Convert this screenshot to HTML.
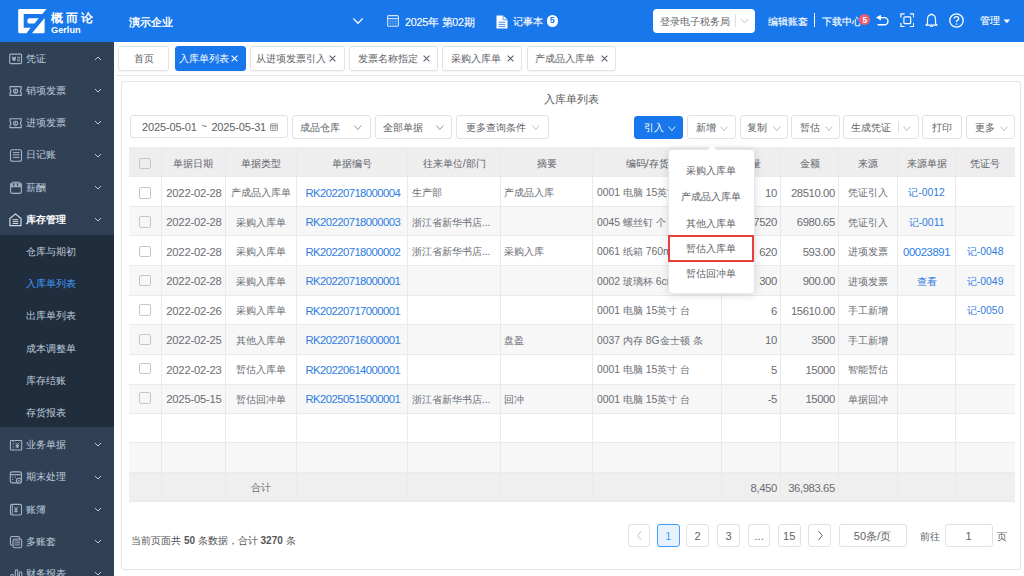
<!DOCTYPE html><html><head><meta charset="utf-8"><style>
*{box-sizing:border-box;margin:0;padding:0}
html,body{width:1024px;height:576px;overflow:hidden;background:#fff;font-family:"Liberation Sans",sans-serif;color:#606266}
.a{position:absolute}
.hdr{position:absolute;left:0;top:0;width:1024px;height:42px;background:#1877ea}
.side{position:absolute;left:0;top:42px;width:114px;height:534px;background:#304156}
.mi{position:absolute;left:0;width:114px;height:32.2px;color:#bfcbd9;font-size:9.8px;line-height:32.2px}
.mi .t{position:absolute;left:25.5px;top:0.4px}
.mi svg.ic{position:absolute;left:9px;top:10.8px}
.mi svg.ch{position:absolute;left:94px;top:12.6px}
.sub{position:absolute;left:0;width:114px;background:#1f2d3d}
.si{position:absolute;left:25.5px;margin-top:0.4px;font-size:9.8px;color:#bfcbd9;height:32.2px;line-height:32.2px}
.tab{position:absolute;top:46px;height:25.4px;border:1px solid #e2e3e5;border-radius:3px;box-shadow:0 0.5px 1px rgba(0,0,0,0.04);background:#fff;font-size:10.3px;line-height:22.3px;color:#5a5e66;text-align:center;white-space:nowrap}
.tab.on{background:#1877ea;border-color:#1877ea;color:#fff}
.card{position:absolute;left:121px;top:80.8px;width:900px;height:489.4px;border:1px solid #e4e5e7;border-radius:3px;background:#fff;box-shadow:0 0 2px rgba(0,0,0,0.04)}
.btn{position:absolute;top:115.4px;height:23px;border:1px solid #dcdfe6;border-radius:3px;background:#fff;font-size:10px;line-height:21px;color:#606266;white-space:nowrap}
.cell{position:absolute;height:100%;white-space:nowrap;overflow:hidden;font-size:10.4px;color:#6a6d73}
.row{position:absolute;left:129.2px;width:885.4px;border-bottom:1px solid #e9eaef}
.vl{position:absolute;width:1px;background:#e9eaef}
.num{font-size:11.3px;letter-spacing:-0.4px}
.pg{position:absolute;top:524px;height:22.6px;border:1px solid #dfe1e5;border-radius:3px;background:#fff;font-size:11px;line-height:20.6px;padding-top:1px;text-align:center;color:#606266}
</style></head><body>
<div class="hdr"></div>
<svg class="a" style="left:0;top:0" width="110" height="42" viewBox="0 0 110 42">
<path fill="#fff" d="M19.6 8.9 H46.5 L42.3 13.9 H23.7 V27.8 H30.7 L26.5 33.3 H19.6 Q18.2 33.3 18.2 31.9 V10.3 Q18.2 8.9 19.6 8.9Z"/>
<path fill="#fff" d="M29.6 18.3 H38.7 L34.6 23.6 H29.6 Q27.3 23.6 27.3 21 Q27.3 18.3 29.6 18.3Z"/>
<path fill="#fff" d="M44.6 18 V31.9 Q44.6 33.3 43.2 33.3 H32 Z"/>
</svg>
<div class="a" style="left:50.9px;top:9.6px;font-size:11.9px;letter-spacing:2.95px;color:#fff;font-weight:bold;line-height:16px">概而论</div>
<div class="a" style="left:51px;top:24.5px;font-size:9.2px;color:#fff;line-height:11px;font-weight:bold">Gerlun</div>
<div class="a" style="left:128.8px;top:14.3px;font-size:11.2px;color:#fff;line-height:16px;font-weight:bold">演示企业</div>
<svg class="a" style="left:352px;top:17px" width="12" height="8" viewBox="0 0 12 8"><path d="M1.3 1.4 L6 6.2 L10.7 1.4" fill="none" stroke="#fff" stroke-width="1.3"/></svg>
<svg class="a" style="left:387.3px;top:15.4px" width="12" height="12" viewBox="0 0 12 12"><rect x="0.6" y="0.6" width="10.8" height="10.6" rx="1" fill="none" stroke="#d6e5fc" stroke-width="1.1"/><path d="M0.6 3.6 H11.4" stroke="#d6e5fc" stroke-width="1.1"/><path d="M3.3 3.6 V11 M5.9 3.6 V11 M8.5 3.6 V11 M0.6 6.3 H11.4 M0.6 8.8 H11.4" stroke="#7fb0f2" stroke-width="0.5"/></svg>
<div class="a" style="left:405px;top:13.5px;font-size:10.7px;color:#fff;line-height:16px;font-weight:normal;-webkit-text-stroke:0.12px #fff;letter-spacing:-0.2px">2025年 第02期</div>
<svg class="a" style="left:495.5px;top:14.5px" width="12" height="14" viewBox="0 0 12 14"><path d="M0.5 0.5 H7.2 L11.5 4.8 V13.5 H0.5Z" fill="#fff"/><path d="M7.2 0.5 V4.8 H11.5" fill="none" stroke="#1877ea" stroke-width="0.7"/><path d="M2.6 7.2 H9.4 M2.6 9.4 H9.4 M2.6 11.6 H9.4" stroke="#1877ea" stroke-width="0.8"/></svg>
<div class="a" style="left:513.3px;top:13.5px;font-size:10.1px;color:#fff;line-height:16px;font-weight:normal;-webkit-text-stroke:0.12px #fff">记事本</div>
<div class="a" style="left:546.6px;top:15px;width:11.5px;height:11.5px;border-radius:50%;background:#fff;color:#1877ea;font-size:9px;font-weight:bold;text-align:center;line-height:11.5px">5</div>
<div class="a" style="left:653px;top:8.6px;width:101.5px;height:24.1px;background:#fff;border-radius:4px"></div>
<div class="a" style="left:660.4px;top:14.1px;font-size:9.9px;color:#606266;line-height:16px">登录电子税务局</div>
<div class="a" style="left:735px;top:14px;width:1px;height:13px;background:#dcdfe6"></div>
<svg class="a" style="left:739.5px;top:18px" width="9" height="6" viewBox="0 0 9 6"><path d="M0.8 1 L4.5 4.8 L8.2 1" fill="none" stroke="#b4b8bf" stroke-width="0.9"/></svg>
<div class="a" style="left:767.5px;top:13.6px;font-size:10px;color:#fff;line-height:16px;font-weight:normal;-webkit-text-stroke:0.12px #fff">编辑账套</div>
<div class="a" style="left:814px;top:13.3px;width:1px;height:14.2px;background:#fff"></div>
<div class="a" style="left:822px;top:13.6px;font-size:10px;color:#fff;line-height:16px;font-weight:normal;-webkit-text-stroke:0.12px #fff">下载中心</div>
<div class="a" style="left:859.1px;top:13.6px;width:11.3px;height:11.3px;border-radius:50%;background:#f45a6c;color:#fff;font-size:8.5px;font-weight:bold;text-align:center;line-height:12px">5</div>
<svg class="a" style="left:875px;top:14px" width="15" height="12" viewBox="0 0 15 12"><path d="M5 3.6 H9.4 A3.55 3.55 0 0 1 9.4 10.7 H2.6" fill="none" stroke="#fff" stroke-width="1.45"/><path d="M1 3.6 L5.9 0.8 V6.4Z" fill="#fff"/></svg>
<svg class="a" style="left:899.6px;top:12.7px" width="14.6" height="14.6" viewBox="0 0 16 16"><path d="M1 5 V1 H5 M11 1 H15 V5 M15 11 V15 H11 M5 15 H1 V11" fill="none" stroke="#fff" stroke-width="1.3"/><rect x="4.3" y="4.3" width="7.4" height="7.4" rx="1" fill="none" stroke="#fff" stroke-width="1.3"/></svg>
<svg class="a" style="left:925.3px;top:12.6px" width="13" height="14.6" viewBox="0 0 14 16"><path d="M7 1.8 Q2.6 1.8 2.6 7 V11.6 L1 13.2 H13 L11.4 11.6 V7 Q11.4 1.8 7 1.8Z" fill="none" stroke="#fff" stroke-width="1.3" stroke-linejoin="round"/><path d="M5.3 14.6 Q7 16 8.7 14.6" fill="none" stroke="#fff" stroke-width="1.2"/><circle cx="7" cy="1.2" r="0.9" fill="#fff"/></svg>
<svg class="a" style="left:949.4px;top:12.5px" width="15" height="15" viewBox="0 0 15 15"><circle cx="7.5" cy="7.5" r="6.7" fill="none" stroke="#fff" stroke-width="1.3"/><path d="M5.3 5.6 Q5.3 3.6 7.5 3.6 Q9.7 3.6 9.7 5.5 Q9.7 6.7 8.4 7.3 Q7.5 7.7 7.5 9" fill="none" stroke="#fff" stroke-width="1.3"/><circle cx="7.5" cy="11" r="0.85" fill="#fff"/></svg>
<div class="a" style="left:979.5px;top:13px;font-size:10.2px;color:#fff;line-height:16px;font-weight:normal;-webkit-text-stroke:0.12px #fff">管理</div>
<svg class="a" style="left:1003px;top:18.5px" width="8" height="5" viewBox="0 0 8 5"><path d="M0.5 0.5 H7.2 L3.85 4.2Z" fill="#fff"/></svg>
<div class="side"></div>
<div class="mi" style="top:42.50px"><span class="t" style="color:#bfcbd9;font-weight:normal">凭证</span><svg class="ch" width="8" height="7" viewBox="0 0 8 7"><path d="M1 5 L4 2 L7 5" fill="none" stroke="#bfcbd9" stroke-width="1"/></svg></div>
<div class="mi" style="top:74.70px"><span class="t" style="color:#bfcbd9;font-weight:normal">销项发票</span><svg class="ch" width="8" height="7" viewBox="0 0 8 7"><path d="M1 2 L4 5 L7 2" fill="none" stroke="#bfcbd9" stroke-width="1"/></svg></div>
<div class="mi" style="top:106.90px"><span class="t" style="color:#bfcbd9;font-weight:normal">进项发票</span><svg class="ch" width="8" height="7" viewBox="0 0 8 7"><path d="M1 2 L4 5 L7 2" fill="none" stroke="#bfcbd9" stroke-width="1"/></svg></div>
<div class="mi" style="top:139.10px"><span class="t" style="color:#bfcbd9;font-weight:normal">日记账</span><svg class="ch" width="8" height="7" viewBox="0 0 8 7"><path d="M1 2 L4 5 L7 2" fill="none" stroke="#bfcbd9" stroke-width="1"/></svg></div>
<div class="mi" style="top:171.30px"><span class="t" style="color:#bfcbd9;font-weight:normal">薪酬</span><svg class="ch" width="8" height="7" viewBox="0 0 8 7"><path d="M1 2 L4 5 L7 2" fill="none" stroke="#bfcbd9" stroke-width="1"/></svg></div>
<div class="mi" style="top:203.50px"><span class="t" style="color:#fff;font-weight:bold">库存管理</span><svg class="ch" width="8" height="7" viewBox="0 0 8 7"><path d="M1 2 L4 5 L7 2" fill="none" stroke="#bfcbd9" stroke-width="1"/></svg></div>
<div class="sub" style="top:234.90px;height:192px"></div>
<div class="si" style="top:235.70px;color:#bfcbd9">仓库与期初</div>
<div class="si" style="top:267.90px;color:#409eff">入库单列表</div>
<div class="si" style="top:300.10px;color:#bfcbd9">出库单列表</div>
<div class="si" style="top:332.30px;color:#bfcbd9">成本调整单</div>
<div class="si" style="top:364.50px;color:#bfcbd9">库存结账</div>
<div class="si" style="top:396.70px;color:#bfcbd9">存货报表</div>
<div class="mi" style="top:428.90px"><span class="t">业务单据</span><svg class="ch" width="8" height="7" viewBox="0 0 8 7"><path d="M1 2 L4 5 L7 2" fill="none" stroke="#bfcbd9" stroke-width="1"/></svg></div>
<div class="mi" style="top:461.10px"><span class="t">期末处理</span><svg class="ch" width="8" height="7" viewBox="0 0 8 7"><path d="M1 2 L4 5 L7 2" fill="none" stroke="#bfcbd9" stroke-width="1"/></svg></div>
<div class="mi" style="top:493.30px"><span class="t">账簿</span><svg class="ch" width="8" height="7" viewBox="0 0 8 7"><path d="M1 2 L4 5 L7 2" fill="none" stroke="#bfcbd9" stroke-width="1"/></svg></div>
<div class="mi" style="top:525.50px"><span class="t">多账套</span><svg class="ch" width="8" height="7" viewBox="0 0 8 7"><path d="M1 2 L4 5 L7 2" fill="none" stroke="#bfcbd9" stroke-width="1"/></svg></div>
<div class="mi" style="top:557.70px"><span class="t">财务报表</span><svg class="ch" width="8" height="7" viewBox="0 0 8 7"><path d="M1 2 L4 5 L7 2" fill="none" stroke="#bfcbd9" stroke-width="1"/></svg></div>
<svg class="a" style="left:0;top:0" width="114" height="576" viewBox="0 0 114 576"><g transform="translate(0,58.80)" fill="none" stroke="#a7b3c2" stroke-width="1.1"><rect x="9.65" y="-4.7" width="11.9" height="9.5" rx="1.2"/><path d="M12.2 -2.7 L13.3 -1.6 H14.7 L15.8 -2.7 V0.6 L14 2.7 L12.2 0.6Z" fill="#a7b3c2" stroke="none"/><path d="M17.1 -1.5 H20.2 M17.1 0.3 H20.2 M17.1 2.1 H20.2" stroke-width="0.9"/></g><g transform="translate(0,91.00)" fill="none" stroke="#a7b3c2" stroke-width="1.1"><path d="M10 -4.4 H21.3 V-1.9 Q19.4 0 21.3 1.9 V4.4 H10 V1.9 Q11.9 0 10 -1.9Z" stroke-linejoin="round"/><circle cx="15.6" cy="0.1" r="2"/><path d="M15.4 -1.2 V1.4" stroke-width="0.8"/></g><g transform="translate(0,123.20)" fill="none" stroke="#a7b3c2" stroke-width="1.1"><path d="M10 -4.4 H21.3 V-1.9 Q19.4 0 21.3 1.9 V4.4 H10 V1.9 Q11.9 0 10 -1.9Z" stroke-linejoin="round"/><circle cx="15.6" cy="0.1" r="2"/><path d="M15.4 -1.2 V1.4" stroke-width="0.8"/></g><g transform="translate(0,155.40)" fill="none" stroke="#a7b3c2" stroke-width="1.1"><rect x="10.5" y="-5.7" width="11" height="11.6" rx="2"/><path d="M12.8 -2.8 H19.4 M12.8 -0.6 H19.4 M12.8 2 H19.4" stroke-width="1"/></g><g transform="translate(0,187.60)" fill="none" stroke="#a7b3c2" stroke-width="1.1"><rect x="10.6" y="-4.6" width="10.8" height="10.4" rx="1.6"/><path d="M10.6 -0.9 H21.4"/><path d="M11.2 -4.2 H20.8 V-1.4 H11.2Z" fill="#a7b3c2" stroke="none"/><path d="M13.1 -4.2 H14.4 V-1.7 H13.1Z M16.9 -4.2 H18.2 V-1.7 H16.9Z" fill="#304156" stroke="none"/><path d="M12.5 -5.4 H19.5" stroke-width="0.9"/></g><g transform="translate(0,219.80)" fill="none" stroke="#d3d9e1" stroke-width="1.2"><path d="M9.9 -1.3 L15.5 -5.9 L21 -1.3 V5.8 H9.9Z" stroke-linejoin="round"/><path d="M12.7 -0.1 H18.3 M12.7 1.8 H18.3 M12.7 3.7 H18.3" stroke-width="1"/></g><g transform="translate(0,445.20)" fill="none" stroke="#a7b3c2" stroke-width="1.1"><rect x="10.4" y="-4.7" width="11.3" height="9.5" rx="0.8"/><path d="M13.2 -4.2 V4.3" stroke-width="0.9" stroke-dasharray="1.3 1.3"/><path d="M15.4 -2.6 L17.3 -0.4 L19.2 -2.6 M17.3 -0.4 V2.8 M15.6 0.3 H19 M15.6 1.7 H19" stroke-width="1"/></g><g transform="translate(0,477.40)" fill="none" stroke="#a7b3c2" stroke-width="1.1"><rect x="10.3" y="-5.5" width="11.2" height="11" rx="1.8"/><path d="M10.3 -2.7 H21.5" stroke-width="1.2"/><path d="M12.2 -0.3 H13.2 M14.9 -0.3 H15.9 M12.2 2.2 H13.2" stroke-width="1"/><circle cx="18.9" cy="3.4" r="2.5" fill="#304156"/><circle cx="18.9" cy="3.4" r="0.9" fill="#a7b3c2" stroke="none"/></g><g transform="translate(0,509.60)" fill="none" stroke="#a7b3c2" stroke-width="1.1"><rect x="10.5" y="-5.2" width="11" height="10.6" rx="1.5"/><path d="M12.3 -4.8 V5" stroke-width="0.9"/><path d="M14.2 -2.7 L16 -0.6 L17.8 -2.7 M16 -0.6 V3 M14.3 0.3 H17.7 M14.3 1.8 H17.7" stroke-width="1"/></g><g transform="translate(0,541.80)" fill="none" stroke="#a7b3c2" stroke-width="1.1"><rect x="10.4" y="-5.3" width="9.2" height="8.8" rx="1.8"/><rect x="13" y="-2.8" width="8.7" height="8.8" rx="1.8" fill="#304156"/><path d="M14.5 -0.9 H20.2 M14.5 1.1 H20.2 M14.5 3.1 H20.2" stroke-width="0.9"/></g><g transform="translate(0,574.00)" fill="none" stroke="#a7b3c2" stroke-width="1.1"><path d="M10.9 8 V1.6 Q10.9 0.3 12.2 0.3 Q13.4 0.3 13.4 1.6 V8 M15.3 8 V-3 Q15.3 -4.3 16.5 -4.3 Q17.7 -4.3 17.7 -3 V8 M19.4 8 V-0.9 Q19.4 -2.2 20.6 -2.2 Q21.8 -2.2 21.8 -0.9 V8"/></g></svg>
<div class="a" style="left:116px;top:74.6px;width:908px;height:1.5px;background:#e8e8e8"></div>
<div class="tab" style="left:118.2px;width:50.4px"></div>
<div class="a" style="left:134.0px;top:51px;font-size:10.1px;line-height:16px;color:#5f6268;white-space:nowrap">首页</div>
<div class="tab on" style="left:174.6px;width:71.6px"></div>
<div class="a" style="left:178.89999999999998px;top:51px;font-size:10.1px;line-height:16px;color:#fff;white-space:nowrap">入库单列表</div>
<svg class="a" style="left:230.8px;top:55.3px" width="7" height="7" viewBox="0 0 7 7"><path d="M0.6 0.6 L6.4 6.4 M6.4 0.6 L0.6 6.4" stroke="#fff" stroke-width="1.1"/></svg>
<div class="tab" style="left:250.3px;width:94.4px"></div>
<div class="a" style="left:256.3px;top:51px;font-size:10.1px;line-height:16px;color:#5f6268;white-space:nowrap">从进项发票引入</div>
<svg class="a" style="left:329.2px;top:55.3px" width="7" height="7" viewBox="0 0 7 7"><path d="M0.6 0.6 L6.4 6.4 M6.4 0.6 L0.6 6.4" stroke="#5f6268" stroke-width="1.1"/></svg>
<div class="tab" style="left:348.8px;width:89.6px"></div>
<div class="a" style="left:357.5px;top:51px;font-size:10.1px;line-height:16px;color:#5f6268;white-space:nowrap">发票名称指定</div>
<svg class="a" style="left:423px;top:55.3px" width="7" height="7" viewBox="0 0 7 7"><path d="M0.6 0.6 L6.4 6.4 M6.4 0.6 L0.6 6.4" stroke="#5f6268" stroke-width="1.1"/></svg>
<div class="tab" style="left:442.4px;width:79.8px"></div>
<div class="a" style="left:451.4px;top:51px;font-size:10.1px;line-height:16px;color:#5f6268;white-space:nowrap">采购入库单</div>
<svg class="a" style="left:507.4px;top:55.3px" width="7" height="7" viewBox="0 0 7 7"><path d="M0.6 0.6 L6.4 6.4 M6.4 0.6 L0.6 6.4" stroke="#5f6268" stroke-width="1.1"/></svg>
<div class="tab" style="left:526.5px;width:89.0px"></div>
<div class="a" style="left:534.9000000000001px;top:51px;font-size:10.1px;line-height:16px;color:#5f6268;white-space:nowrap">产成品入库单</div>
<svg class="a" style="left:600.7px;top:55.3px" width="7" height="7" viewBox="0 0 7 7"><path d="M0.6 0.6 L6.4 6.4 M6.4 0.6 L0.6 6.4" stroke="#5f6268" stroke-width="1.1"/></svg>
<div class="card"></div>
<div class="a" style="left:521.8px;top:90.8px;width:100px;text-align:center;font-size:11.4px;line-height:16px;color:#5a5a5a">入库单列表</div>
<div class="a" style="left:130.2px;top:115.4px;width:158.1px;height:23px;border:1px solid #e0e2e6;border-radius:3px;background:#fff"></div>
<div class="a" style="left:142.1px;top:119.3px;font-size:11px;line-height:16px;color:#606266;white-space:nowrap;letter-spacing:-0.16px">2025-05-01</div>
<div class="a" style="left:201.3px;top:118.6px;font-size:10px;line-height:16px;color:#777">~</div>
<div class="a" style="left:211.4px;top:119.3px;font-size:11px;line-height:16px;color:#606266;white-space:nowrap;letter-spacing:-0.16px">2025-05-31</div>
<svg class="a" style="left:269.8px;top:123.4px" width="8" height="8" viewBox="0 0 8 8"><rect x="0.5" y="0.8" width="7" height="6.7" rx="0.6" fill="none" stroke="#9a9a9a" stroke-width="0.9"/><path d="M0.5 2.6 H7.5" stroke="#9a9a9a" stroke-width="1.4"/><path d="M0.5 5 H7.5 M2.8 2.6 V7.5 M5.2 2.6 V7.5" stroke="#9a9a9a" stroke-width="0.7"/></svg>
<div class="a" style="left:292.4px;top:115.3px;width:78.3px;height:23.3px;border:1px solid #e0e2e6;border-radius:3px;background:#fff"></div>
<div class="a" style="left:300.1px;top:119.9px;font-size:10px;line-height:16px;color:#606266;white-space:nowrap;">成品仓库</div>
<svg class="a" style="left:353.9px;top:124.7px" width="8" height="6" viewBox="0 0 8 6"><path d="M0.5 0.5 L3.85 4.6 L7.2 0.5" fill="none" stroke="#8a8d92" stroke-width="0.9"/></svg>
<div class="a" style="left:374.6px;top:115.3px;width:77.8px;height:23.3px;border:1px solid #e0e2e6;border-radius:3px;background:#fff"></div>
<div class="a" style="left:382.6px;top:119.9px;font-size:10px;line-height:16px;color:#606266;white-space:nowrap;">全部单据</div>
<svg class="a" style="left:435.8px;top:124.7px" width="8" height="6" viewBox="0 0 8 6"><path d="M0.5 0.5 L3.85 4.6 L7.2 0.5" fill="none" stroke="#8a8d92" stroke-width="0.9"/></svg>
<div class="a" style="left:456.4px;top:115.3px;width:92.2px;height:23.3px;border:1px solid #e0e2e6;border-radius:3px;background:#fff"></div>
<div class="a" style="left:466.0px;top:119.9px;font-size:10px;line-height:16px;color:#606266;white-space:nowrap;">更多查询条件</div>
<svg class="a" style="left:532.1px;top:124.7px" width="8" height="6" viewBox="0 0 8 6"><path d="M0.5 0.5 L3.85 4.6 L7.2 0.5" fill="none" stroke="#b4b7bc" stroke-width="0.9"/></svg>
<div class="a" style="left:634.1px;top:115.6px;width:49.1px;height:23px;border:1px solid #1877ea;border-radius:3px;background:#1877ea"></div>
<div class="a" style="left:643.6px;top:119.9px;font-size:10px;line-height:16px;color:#fff;white-space:nowrap;">引入</div>
<svg class="a" style="left:667.6px;top:125.5px" width="8" height="6" viewBox="0 0 8 6"><path d="M0.5 0.5 L3.85 4.6 L7.2 0.5" fill="none" stroke="#fff" stroke-width="0.9"/></svg>
<div class="a" style="left:687.3px;top:115.4px;width:48.6px;height:23.6px;border:1px solid #e0e2e6;border-radius:3px;background:#fff"></div>
<div class="a" style="left:695.6px;top:119.9px;font-size:10px;line-height:16px;color:#606266;white-space:nowrap;">新增</div>
<svg class="a" style="left:720.3px;top:125.5px" width="8" height="6" viewBox="0 0 8 6"><path d="M0.5 0.5 L3.85 4.6 L7.2 0.5" fill="none" stroke="#b0b3b8" stroke-width="0.9"/></svg>
<div class="a" style="left:739.8px;top:115.4px;width:47.8px;height:23.6px;border:1px solid #e0e2e6;border-radius:3px;background:#fff"></div>
<div class="a" style="left:747.4px;top:119.9px;font-size:10px;line-height:16px;color:#606266;white-space:nowrap;">复制</div>
<svg class="a" style="left:772.5px;top:125.5px" width="8" height="6" viewBox="0 0 8 6"><path d="M0.5 0.5 L3.85 4.6 L7.2 0.5" fill="none" stroke="#b0b3b8" stroke-width="0.9"/></svg>
<div class="a" style="left:791.4px;top:115.4px;width:48.6px;height:23.6px;border:1px solid #e0e2e6;border-radius:3px;background:#fff"></div>
<div class="a" style="left:799.8px;top:119.9px;font-size:10px;line-height:16px;color:#606266;white-space:nowrap;">暂估</div>
<svg class="a" style="left:825.2px;top:125.5px" width="8" height="6" viewBox="0 0 8 6"><path d="M0.5 0.5 L3.85 4.6 L7.2 0.5" fill="none" stroke="#b0b3b8" stroke-width="0.9"/></svg>
<div class="a" style="left:843.4px;top:115.4px;width:75.3px;height:23.6px;border:1px solid #e0e2e6;border-radius:3px;background:#fff"></div>
<div class="a" style="left:850.5px;top:119.9px;font-size:10px;line-height:16px;color:#606266;white-space:nowrap;">生成凭证</div>
<svg class="a" style="left:903.1px;top:125.5px" width="8" height="6" viewBox="0 0 8 6"><path d="M0.5 0.5 L3.85 4.6 L7.2 0.5" fill="none" stroke="#b0b3b8" stroke-width="0.9"/></svg>
<div class="a" style="left:922.2px;top:115.4px;width:40.1px;height:23.6px;border:1px solid #e0e2e6;border-radius:3px;background:#fff"></div>
<div class="a" style="left:931.9px;top:119.9px;font-size:10px;line-height:16px;color:#606266;white-space:nowrap;">打印</div>
<div class="a" style="left:966.3px;top:115.4px;width:49.1px;height:23.6px;border:1px solid #e0e2e6;border-radius:3px;background:#fff"></div>
<div class="a" style="left:974.9px;top:119.9px;font-size:10px;line-height:16px;color:#606266;white-space:nowrap;">更多</div>
<svg class="a" style="left:999.8px;top:125.5px" width="8" height="6" viewBox="0 0 8 6"><path d="M0.5 0.5 L3.85 4.6 L7.2 0.5" fill="none" stroke="#b0b3b8" stroke-width="0.9"/></svg>
<div class="a" style="left:897.5px;top:121.5px;width:1px;height:11px;background:#dcdfe6"></div>
<div class="row" style="top:147.0px;height:30.05px;background:#eeeeef"></div>
<div class="cell" style="left:161.3px;top:147.60px;width:64.1px;height:30px;line-height:30px;text-align:center;;color:#5f6168;padding-top:1.0px;">单据日期</div>
<div class="cell" style="left:225.4px;top:147.60px;width:71.0px;height:30px;line-height:30px;text-align:center;;color:#5f6168;padding-top:1.0px;">单据类型</div>
<div class="cell" style="left:296.4px;top:147.60px;width:111.4px;height:30px;line-height:30px;text-align:center;;color:#5f6168;padding-top:1.0px;">单据编号</div>
<div class="cell" style="left:407.8px;top:147.60px;width:92.6px;height:30px;line-height:30px;text-align:center;;color:#5f6168;padding-top:1.0px;">往来单位/部门</div>
<div class="cell" style="left:500.4px;top:147.60px;width:92.5px;height:30px;line-height:30px;text-align:center;;color:#5f6168;padding-top:1.0px;">摘要</div>
<div class="cell" style="left:592.9px;top:147.60px;width:128.8px;height:30px;line-height:30px;text-align:center;;color:#5f6168;padding-top:1.0px;">编码/存货名称</div>
<div class="cell" style="left:721.7px;top:147.60px;width:59.2px;height:30px;line-height:30px;text-align:center;;color:#5f6168;padding-top:1.0px;">数量</div>
<div class="cell" style="left:780.9px;top:147.60px;width:57.5px;height:30px;line-height:30px;text-align:center;;color:#5f6168;padding-top:1.0px;">金额</div>
<div class="cell" style="left:838.4px;top:147.60px;width:59.0px;height:30px;line-height:30px;text-align:center;;color:#5f6168;padding-top:1.0px;">来源</div>
<div class="cell" style="left:897.4px;top:147.60px;width:58.3px;height:30px;line-height:30px;text-align:center;;color:#5f6168;padding-top:1.0px;">来源单据</div>
<div class="cell" style="left:955.7px;top:147.60px;width:58.9px;height:30px;line-height:30px;text-align:center;;color:#5f6168;padding-top:1.0px;">凭证号</div>
<div class="row" style="top:177.05px;height:29.66px;background:#fff"></div>
<div class="cell num" style="left:161.3px;top:177.15px;width:64.1px;height:30px;line-height:30px;text-align:left;padding-left:5px;letter-spacing:-0.25px;padding-top:0.6px;">2022-02-28</div>
<div class="cell" style="left:225.4px;top:177.15px;width:71.0px;height:30px;line-height:30px;text-align:center;;padding-top:1.0px;">产成品入库单</div>
<div class="cell num" style="left:296.4px;top:177.15px;width:111.4px;height:30px;line-height:30px;text-align:left;padding-left:9px;color:#2e7de1;letter-spacing:-0.55px;padding-top:0.6px;">RK20220718000004</div>
<div class="cell" style="left:407.8px;top:177.15px;width:92.6px;height:30px;line-height:30px;text-align:left;padding-left:4px;padding-top:1.0px;">生产部</div>
<div class="cell" style="left:500.4px;top:177.15px;width:92.5px;height:30px;line-height:30px;text-align:left;padding-left:4px;padding-top:1.0px;">产成品入库</div>
<div class="cell" style="left:592.9px;top:177.15px;width:128.8px;height:30px;line-height:30px;text-align:left;padding-left:4px;padding-top:1.0px;">0001 电脑 15英寸 台</div>
<div class="cell num" style="left:721.7px;top:177.15px;width:59.2px;height:30px;line-height:30px;text-align:right;padding-right:4px;letter-spacing:-0.4px;padding-top:0.6px;">10</div>
<div class="cell num" style="left:780.9px;top:177.15px;width:57.5px;height:30px;line-height:30px;text-align:right;padding-right:3.5px;letter-spacing:-0.4px;padding-top:0.6px;">28510.00</div>
<div class="cell" style="left:838.4px;top:177.15px;width:59.0px;height:30px;line-height:30px;text-align:center;;padding-top:1.0px;">凭证引入</div>
<div class="cell" style="left:897.4px;top:177.15px;width:58.3px;height:30px;line-height:30px;text-align:center;;color:#2e7de1;padding-top:1.0px;">记-0012</div>
<div class="row" style="top:206.71px;height:29.66px;background:#f7f7f8"></div>
<div class="cell num" style="left:161.3px;top:206.67px;width:64.1px;height:30px;line-height:30px;text-align:left;padding-left:5px;letter-spacing:-0.25px;padding-top:0.6px;">2022-02-28</div>
<div class="cell" style="left:225.4px;top:206.67px;width:71.0px;height:30px;line-height:30px;text-align:center;;padding-top:1.0px;">采购入库单</div>
<div class="cell num" style="left:296.4px;top:206.67px;width:111.4px;height:30px;line-height:30px;text-align:left;padding-left:9px;color:#2e7de1;letter-spacing:-0.55px;padding-top:0.6px;">RK20220718000003</div>
<div class="cell" style="left:407.8px;top:206.67px;width:92.6px;height:30px;line-height:30px;text-align:left;padding-left:4px;padding-top:1.0px;">浙江省新华书店...</div>
<div class="cell" style="left:592.9px;top:206.67px;width:128.8px;height:30px;line-height:30px;text-align:left;padding-left:4px;padding-top:1.0px;">0045 螺丝钉 个</div>
<div class="cell num" style="left:721.7px;top:206.67px;width:59.2px;height:30px;line-height:30px;text-align:right;padding-right:4px;letter-spacing:-0.4px;padding-top:0.6px;">7520</div>
<div class="cell num" style="left:780.9px;top:206.67px;width:57.5px;height:30px;line-height:30px;text-align:right;padding-right:3.5px;letter-spacing:-0.4px;padding-top:0.6px;">6980.65</div>
<div class="cell" style="left:838.4px;top:206.67px;width:59.0px;height:30px;line-height:30px;text-align:center;;padding-top:1.0px;">凭证引入</div>
<div class="cell" style="left:897.4px;top:206.67px;width:58.3px;height:30px;line-height:30px;text-align:center;;color:#2e7de1;padding-top:1.0px;">记-0011</div>
<div class="row" style="top:236.37px;height:29.66px;background:#fff"></div>
<div class="cell num" style="left:161.3px;top:236.19px;width:64.1px;height:30px;line-height:30px;text-align:left;padding-left:5px;letter-spacing:-0.25px;padding-top:0.6px;">2022-02-28</div>
<div class="cell" style="left:225.4px;top:236.19px;width:71.0px;height:30px;line-height:30px;text-align:center;;padding-top:1.0px;">采购入库单</div>
<div class="cell num" style="left:296.4px;top:236.19px;width:111.4px;height:30px;line-height:30px;text-align:left;padding-left:9px;color:#2e7de1;letter-spacing:-0.55px;padding-top:0.6px;">RK20220718000002</div>
<div class="cell" style="left:407.8px;top:236.19px;width:92.6px;height:30px;line-height:30px;text-align:left;padding-left:4px;padding-top:1.0px;">浙江省新华书店...</div>
<div class="cell" style="left:500.4px;top:236.19px;width:92.5px;height:30px;line-height:30px;text-align:left;padding-left:4px;padding-top:1.0px;">采购入库</div>
<div class="cell" style="left:592.9px;top:236.19px;width:128.8px;height:30px;line-height:30px;text-align:left;padding-left:4px;padding-top:1.0px;">0061 纸箱 760mm</div>
<div class="cell num" style="left:721.7px;top:236.19px;width:59.2px;height:30px;line-height:30px;text-align:right;padding-right:4px;letter-spacing:-0.4px;padding-top:0.6px;">620</div>
<div class="cell num" style="left:780.9px;top:236.19px;width:57.5px;height:30px;line-height:30px;text-align:right;padding-right:3.5px;letter-spacing:-0.4px;padding-top:0.6px;">593.00</div>
<div class="cell" style="left:838.4px;top:236.19px;width:59.0px;height:30px;line-height:30px;text-align:center;;padding-top:1.0px;">进项发票</div>
<div class="cell num" style="left:897.4px;top:236.19px;width:58.3px;height:30px;line-height:30px;text-align:center;;color:#2e7de1;letter-spacing:-0.4px;padding-top:0.6px;">00023891</div>
<div class="cell" style="left:955.7px;top:236.19px;width:58.9px;height:30px;line-height:30px;text-align:center;;color:#2e7de1;padding-top:1.0px;">记-0048</div>
<div class="row" style="top:266.03px;height:29.66px;background:#f7f7f8"></div>
<div class="cell num" style="left:161.3px;top:265.71px;width:64.1px;height:30px;line-height:30px;text-align:left;padding-left:5px;letter-spacing:-0.25px;padding-top:0.6px;">2022-02-28</div>
<div class="cell" style="left:225.4px;top:265.71px;width:71.0px;height:30px;line-height:30px;text-align:center;;padding-top:1.0px;">采购入库单</div>
<div class="cell num" style="left:296.4px;top:265.71px;width:111.4px;height:30px;line-height:30px;text-align:left;padding-left:9px;color:#2e7de1;letter-spacing:-0.55px;padding-top:0.6px;">RK20220718000001</div>
<div class="cell" style="left:592.9px;top:265.71px;width:128.8px;height:30px;line-height:30px;text-align:left;padding-left:4px;padding-top:1.0px;">0002 玻璃杯 6cm</div>
<div class="cell num" style="left:721.7px;top:265.71px;width:59.2px;height:30px;line-height:30px;text-align:right;padding-right:4px;letter-spacing:-0.4px;padding-top:0.6px;">300</div>
<div class="cell num" style="left:780.9px;top:265.71px;width:57.5px;height:30px;line-height:30px;text-align:right;padding-right:3.5px;letter-spacing:-0.4px;padding-top:0.6px;">900.00</div>
<div class="cell" style="left:838.4px;top:265.71px;width:59.0px;height:30px;line-height:30px;text-align:center;;padding-top:1.0px;">进项发票</div>
<div class="cell" style="left:897.4px;top:265.71px;width:58.3px;height:30px;line-height:30px;text-align:center;;color:#2e7de1;padding-top:1.0px;">查看</div>
<div class="cell" style="left:955.7px;top:265.71px;width:58.9px;height:30px;line-height:30px;text-align:center;;color:#2e7de1;padding-top:1.0px;">记-0049</div>
<div class="row" style="top:295.69px;height:29.66px;background:#fff"></div>
<div class="cell num" style="left:161.3px;top:295.23px;width:64.1px;height:30px;line-height:30px;text-align:left;padding-left:5px;letter-spacing:-0.25px;padding-top:0.6px;">2022-02-26</div>
<div class="cell" style="left:225.4px;top:295.23px;width:71.0px;height:30px;line-height:30px;text-align:center;;padding-top:1.0px;">采购入库单</div>
<div class="cell num" style="left:296.4px;top:295.23px;width:111.4px;height:30px;line-height:30px;text-align:left;padding-left:9px;color:#2e7de1;letter-spacing:-0.55px;padding-top:0.6px;">RK20220717000001</div>
<div class="cell" style="left:592.9px;top:295.23px;width:128.8px;height:30px;line-height:30px;text-align:left;padding-left:4px;padding-top:1.0px;">0001 电脑 15英寸 台</div>
<div class="cell num" style="left:721.7px;top:295.23px;width:59.2px;height:30px;line-height:30px;text-align:right;padding-right:4px;letter-spacing:-0.4px;padding-top:0.6px;">6</div>
<div class="cell num" style="left:780.9px;top:295.23px;width:57.5px;height:30px;line-height:30px;text-align:right;padding-right:3.5px;letter-spacing:-0.4px;padding-top:0.6px;">15610.00</div>
<div class="cell" style="left:838.4px;top:295.23px;width:59.0px;height:30px;line-height:30px;text-align:center;;padding-top:1.0px;">手工新增</div>
<div class="cell" style="left:955.7px;top:295.23px;width:58.9px;height:30px;line-height:30px;text-align:center;;color:#2e7de1;padding-top:1.0px;">记-0050</div>
<div class="row" style="top:325.35px;height:29.66px;background:#f7f7f8"></div>
<div class="cell num" style="left:161.3px;top:324.75px;width:64.1px;height:30px;line-height:30px;text-align:left;padding-left:5px;letter-spacing:-0.25px;padding-top:0.6px;">2022-02-25</div>
<div class="cell" style="left:225.4px;top:324.75px;width:71.0px;height:30px;line-height:30px;text-align:center;;padding-top:1.0px;">其他入库单</div>
<div class="cell num" style="left:296.4px;top:324.75px;width:111.4px;height:30px;line-height:30px;text-align:left;padding-left:9px;color:#2e7de1;letter-spacing:-0.55px;padding-top:0.6px;">RK20220716000001</div>
<div class="cell" style="left:500.4px;top:324.75px;width:92.5px;height:30px;line-height:30px;text-align:left;padding-left:4px;padding-top:1.0px;">盘盈</div>
<div class="cell" style="left:592.9px;top:324.75px;width:128.8px;height:30px;line-height:30px;text-align:left;padding-left:4px;padding-top:1.0px;">0037 内存 8G金士顿 条</div>
<div class="cell num" style="left:721.7px;top:324.75px;width:59.2px;height:30px;line-height:30px;text-align:right;padding-right:4px;letter-spacing:-0.4px;padding-top:0.6px;">10</div>
<div class="cell num" style="left:780.9px;top:324.75px;width:57.5px;height:30px;line-height:30px;text-align:right;padding-right:3.5px;letter-spacing:-0.4px;padding-top:0.6px;">3500</div>
<div class="cell" style="left:838.4px;top:324.75px;width:59.0px;height:30px;line-height:30px;text-align:center;;padding-top:1.0px;">手工新增</div>
<div class="row" style="top:355.01px;height:29.66px;background:#fff"></div>
<div class="cell num" style="left:161.3px;top:354.27px;width:64.1px;height:30px;line-height:30px;text-align:left;padding-left:5px;letter-spacing:-0.25px;padding-top:0.6px;">2022-02-23</div>
<div class="cell" style="left:225.4px;top:354.27px;width:71.0px;height:30px;line-height:30px;text-align:center;;padding-top:1.0px;">暂估入库单</div>
<div class="cell num" style="left:296.4px;top:354.27px;width:111.4px;height:30px;line-height:30px;text-align:left;padding-left:9px;color:#2e7de1;letter-spacing:-0.55px;padding-top:0.6px;">RK20220614000001</div>
<div class="cell" style="left:592.9px;top:354.27px;width:128.8px;height:30px;line-height:30px;text-align:left;padding-left:4px;padding-top:1.0px;">0001 电脑 15英寸 台</div>
<div class="cell num" style="left:721.7px;top:354.27px;width:59.2px;height:30px;line-height:30px;text-align:right;padding-right:4px;letter-spacing:-0.4px;padding-top:0.6px;">5</div>
<div class="cell num" style="left:780.9px;top:354.27px;width:57.5px;height:30px;line-height:30px;text-align:right;padding-right:3.5px;letter-spacing:-0.4px;padding-top:0.6px;">15000</div>
<div class="cell" style="left:838.4px;top:354.27px;width:59.0px;height:30px;line-height:30px;text-align:center;;padding-top:1.0px;">智能暂估</div>
<div class="row" style="top:384.67px;height:29.66px;background:#f7f7f8"></div>
<div class="cell num" style="left:161.3px;top:383.79px;width:64.1px;height:30px;line-height:30px;text-align:left;padding-left:5px;letter-spacing:-0.25px;padding-top:0.6px;">2025-05-15</div>
<div class="cell" style="left:225.4px;top:383.79px;width:71.0px;height:30px;line-height:30px;text-align:center;;padding-top:1.0px;">暂估回冲单</div>
<div class="cell num" style="left:296.4px;top:383.79px;width:111.4px;height:30px;line-height:30px;text-align:left;padding-left:9px;color:#2e7de1;letter-spacing:-0.55px;padding-top:0.6px;">RK20250515000001</div>
<div class="cell" style="left:407.8px;top:383.79px;width:92.6px;height:30px;line-height:30px;text-align:left;padding-left:4px;padding-top:1.0px;">浙江省新华书店...</div>
<div class="cell" style="left:500.4px;top:383.79px;width:92.5px;height:30px;line-height:30px;text-align:left;padding-left:4px;padding-top:1.0px;">回冲</div>
<div class="cell" style="left:592.9px;top:383.79px;width:128.8px;height:30px;line-height:30px;text-align:left;padding-left:4px;padding-top:1.0px;">0001 电脑 15英寸 台</div>
<div class="cell num" style="left:721.7px;top:383.79px;width:59.2px;height:30px;line-height:30px;text-align:right;padding-right:4px;letter-spacing:-0.4px;padding-top:0.6px;">-5</div>
<div class="cell num" style="left:780.9px;top:383.79px;width:57.5px;height:30px;line-height:30px;text-align:right;padding-right:3.5px;letter-spacing:-0.4px;padding-top:0.6px;">15000</div>
<div class="cell" style="left:838.4px;top:383.79px;width:59.0px;height:30px;line-height:30px;text-align:center;;padding-top:1.0px;">单据回冲</div>
<div class="row" style="top:414.33px;height:28.97px;background:#fff"></div>
<div class="row" style="top:443.30px;height:29.40px;background:#f7f7f8"></div>
<div class="row" style="top:472.70px;height:29.20px;background:#efeff0"></div>
<div class="cell" style="left:225.4px;top:472.45px;width:71.0px;height:30px;line-height:30px;text-align:center;;padding-top:1.0px;">合计</div>
<div class="cell num" style="left:721.7px;top:472.45px;width:59.2px;height:30px;line-height:30px;text-align:right;padding-right:4px;letter-spacing:-0.4px;padding-top:0.6px;">8,450</div>
<div class="cell num" style="left:780.9px;top:472.45px;width:57.5px;height:30px;line-height:30px;text-align:right;padding-right:3.5px;letter-spacing:-0.4px;padding-top:0.6px;">36,983.65</div>
<div class="a" style="left:139.2px;top:157.95px;width:11.5px;height:11.5px;border:1px solid #c4c5c8;border-radius:2px;background:transparent"></div>
<div class="a" style="left:139.2px;top:187.05px;width:11.5px;height:11.5px;border:1px solid #c4c5c8;border-radius:2px;background:transparent"></div>
<div class="a" style="left:139.2px;top:216.35px;width:11.5px;height:11.5px;border:1px solid #c4c5c8;border-radius:2px;background:transparent"></div>
<div class="a" style="left:139.2px;top:245.65px;width:11.5px;height:11.5px;border:1px solid #c4c5c8;border-radius:2px;background:transparent"></div>
<div class="a" style="left:139.2px;top:274.95px;width:11.5px;height:11.5px;border:1px solid #c4c5c8;border-radius:2px;background:transparent"></div>
<div class="a" style="left:139.2px;top:304.25px;width:11.5px;height:11.5px;border:1px solid #c4c5c8;border-radius:2px;background:transparent"></div>
<div class="a" style="left:139.2px;top:333.55px;width:11.5px;height:11.5px;border:1px solid #c4c5c8;border-radius:2px;background:transparent"></div>
<div class="a" style="left:139.2px;top:362.85px;width:11.5px;height:11.5px;border:1px solid #c4c5c8;border-radius:2px;background:transparent"></div>
<div class="a" style="left:139.2px;top:392.15px;width:11.5px;height:11.5px;border:1px solid #c4c5c8;border-radius:2px;background:transparent"></div>
<div class="vl" style="left:160.8px;top:147.0px;height:354.9px"></div>
<div class="vl" style="left:224.9px;top:147.0px;height:354.9px"></div>
<div class="vl" style="left:295.9px;top:147.0px;height:354.9px"></div>
<div class="vl" style="left:407.3px;top:147.0px;height:354.9px"></div>
<div class="vl" style="left:499.9px;top:147.0px;height:354.9px"></div>
<div class="vl" style="left:592.4px;top:147.0px;height:354.9px"></div>
<div class="vl" style="left:721.2px;top:147.0px;height:354.9px"></div>
<div class="vl" style="left:780.4px;top:147.0px;height:354.9px"></div>
<div class="vl" style="left:837.9px;top:147.0px;height:354.9px"></div>
<div class="vl" style="left:896.9px;top:147.0px;height:354.9px"></div>
<div class="vl" style="left:955.2px;top:147.0px;height:354.9px"></div>
<div class="a" style="left:131.1px;top:532.8px;font-size:10px;line-height:16px;color:#555">当前页面共 <b>50</b> 条数据，合计 <b>3270</b> 条</div>
<div class="pg" style="left:627.5px;width:22.7px;"><svg width="9" height="12" viewBox="0 0 9 12" style="position:absolute;left:6.5px;top:4.5px"><path d="M6.2 1.2 L2.6 5.6 L6.2 10" fill="none" stroke="#c0c4cc" stroke-width="1"/></svg></div>
<div class="pg" style="left:657px;width:22.7px;border-color:#409eff;background:#e8f2fe;color:#409eff;">1</div>
<div class="pg" style="left:686.2px;width:22.7px;">2</div>
<div class="pg" style="left:717.1px;width:22.7px;">3</div>
<div class="pg" style="left:747.8px;width:22.7px;">...</div>
<div class="pg" style="left:777.9px;width:22.7px;">15</div>
<div class="pg" style="left:808px;width:22.7px;"><svg width="9" height="12" viewBox="0 0 9 12" style="position:absolute;left:6.5px;top:4.5px"><path d="M2.6 1.2 L6.2 5.6 L2.6 10" fill="none" stroke="#606266" stroke-width="1"/></svg></div>
<div class="pg" style="left:838.5px;width:68px">50条/页</div>
<div class="a" style="left:920px;top:528.8px;font-size:10px;line-height:16px">前往</div>
<div class="pg" style="left:944.6px;width:48px;height:22.7px">1</div>
<div class="a" style="left:996.5px;top:528.8px;font-size:10px;line-height:16px">页</div>
<div class="a" style="left:668px;top:149.3px;width:87px;height:144.6px;background:#fff;border:1px solid #e4e6ea;border-radius:4px;box-shadow:0 1px 10px rgba(0,0,0,0.13)"></div>
<svg class="a" style="left:700px;top:140px" width="24" height="12" viewBox="0 0 24 12"><path d="M7 10 L12 4.2 L17 10Z" fill="#fff"/><path d="M7 10 L12 4.2 L17 10" fill="none" stroke="rgba(0,0,0,0.03)" stroke-width="1"/></svg>
<div class="a" style="left:667.5px;width:87px;top:162.7px;height:16px;line-height:16px;text-align:center;font-size:10.3px;color:#606266">采购入库单</div>
<div class="a" style="left:667.5px;width:87px;top:188.5px;height:16px;line-height:16px;text-align:center;font-size:10.3px;color:#606266">产成品入库单</div>
<div class="a" style="left:667.5px;width:87px;top:215.7px;height:16px;line-height:16px;text-align:center;font-size:10.3px;color:#606266">其他入库单</div>
<div class="a" style="left:667.5px;width:87px;top:240.6px;height:16px;line-height:16px;text-align:center;font-size:10.3px;color:#606266">暂估入库单</div>
<div class="a" style="left:667.5px;width:87px;top:265.8px;height:16px;line-height:16px;text-align:center;font-size:10.3px;color:#606266">暂估回冲单</div>
<div class="a" style="left:668.3px;top:234.8px;width:86px;height:27px;border:2px solid #e8403a"></div>
</body></html>
